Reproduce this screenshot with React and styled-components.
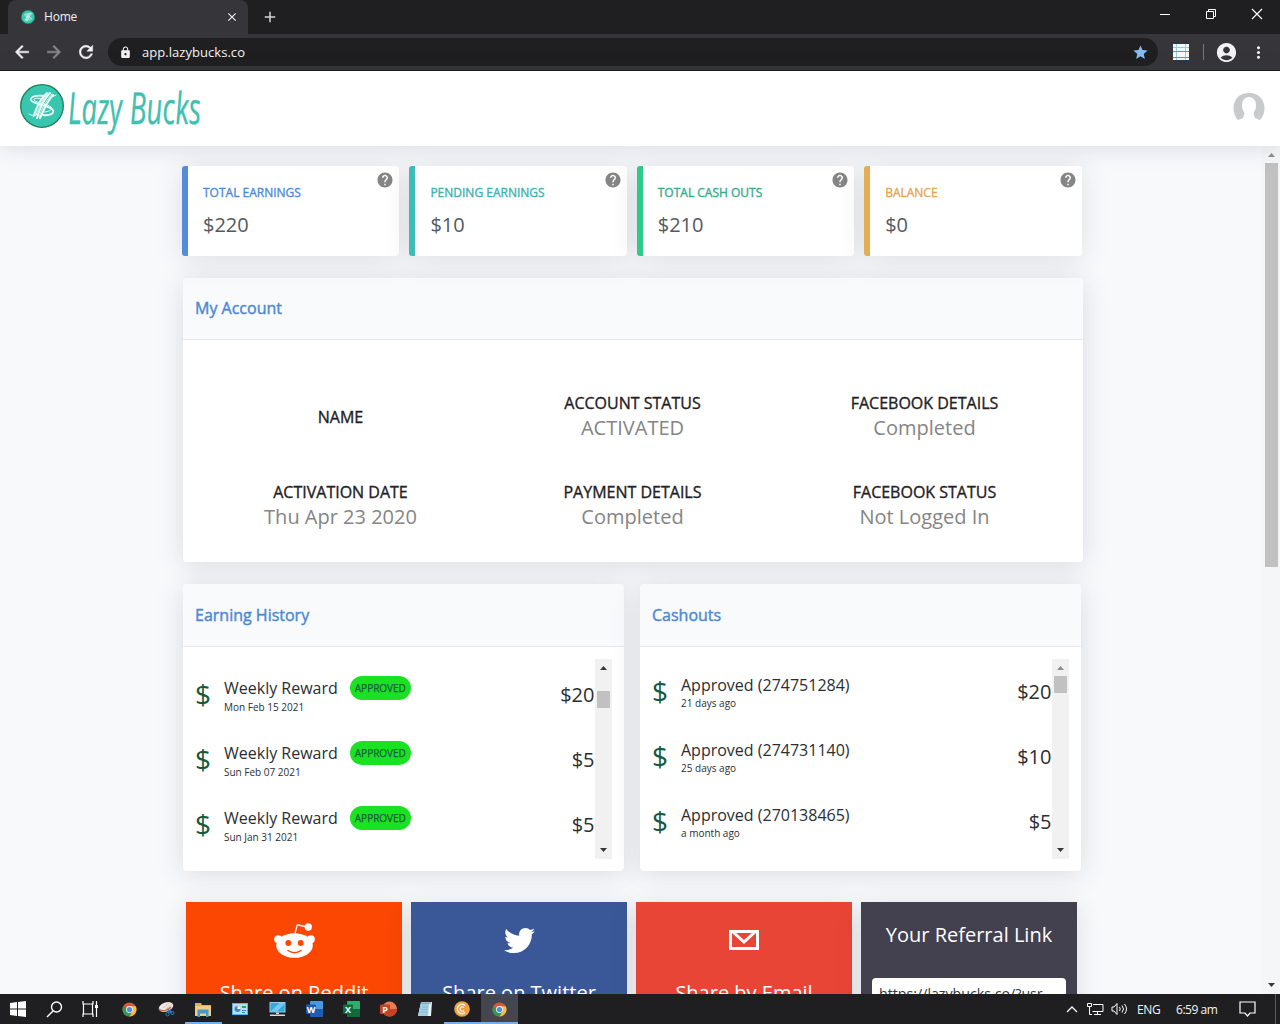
import styled, {createGlobalStyle} from "styled-components";
import {FaTwitter} from "react-icons/fa";
import {
    MdAccountCircle,
    MdAdd,
    MdArrowBack,
    MdArrowForward,
    MdClose,
    MdHelp,
    MdLock,
    MdMoreVert,
    MdRefresh,
    MdStar
} from "react-icons/md";

const GlobalStyle = createGlobalStyle`
    * {
        box-sizing: border-box;
    }

    body {
        margin: 0;
        overflow: hidden;
        font-family: "Open Sans", "Noto Sans", sans-serif;
        color: #2b2e32;
    }

    svg {
        display: block;
        flex-shrink: 0;
    }
`

const stats = [
    {id: 1, name: "TOTAL EARNINGS", value: "$220", color: "#4e8bd8", border: "#538cd8"},
    {id: 2, name: "PENDING EARNINGS", value: "$10", color: "#40b1b0", border: "#3dbcb8"},
    {id: 3, name: "TOTAL CASH OUTS", value: "$210", color: "#36ab8a", border: "#2fcb86"},
    {id: 4, name: "BALANCE", value: "$0", color: "#e3a850", border: "#e4ae57"}
]

const account = [
    {id: 1, name: "NAME"},
    {id: 2, name: "ACCOUNT STATUS", value: "ACTIVATED"},
    {id: 3, name: "FACEBOOK DETAILS", value: "Completed"},
    {id: 4, name: "ACTIVATION DATE", value: "Thu Apr 23 2020"},
    {id: 5, name: "PAYMENT DETAILS", value: "Completed"},
    {id: 6, name: "FACEBOOK STATUS", value: "Not Logged In"}
]

const earnings = [
    {id: 1, title: "Weekly Reward", date: "Mon Feb 15 2021", amount: "$20", badge: "APPROVED"},
    {id: 2, title: "Weekly Reward", date: "Sun Feb 07 2021", amount: "$5", badge: "APPROVED"},
    {id: 3, title: "Weekly Reward", date: "Sun Jan 31 2021", amount: "$5", badge: "APPROVED"}
]

const cashouts = [
    {id: 1, title: "Approved (274751284)", date: "21 days ago", amount: "$20"},
    {id: 2, title: "Approved (274731140)", date: "25 days ago", amount: "$10"},
    {id: 3, title: "Approved (270138465)", date: "a month ago", amount: "$5"}
]

const Screen = styled.div`
    display: flex;
    flex-direction: column;
    width: 1280px;
    height: 1024px;
    overflow: hidden;
    background: #f8f9fb;
`

/* browser window */

const TabStrip = styled.div`
    display: flex;
    height: 34px;
    flex-shrink: 0;
    padding-left: 8px;
    background: #1f1f21;
    color: #f1f1f1;
`

const Tab = styled.div`
    display: flex;
    align-items: center;
    width: 240px;
    padding: 0 9px 0 13px;
    border-radius: 8px 8px 0 0;
    background: #35353a;
    font-size: 12px;

    span {
        flex: 1;
        margin: -1px 0 0 9px;
        letter-spacing: -0.2px;
    }

    svg:last-child path:last-child {
        stroke: #f1f1f1;
    }
`

const NewTab = styled.div`
    display: flex;
    align-items: center;
    flex: 1;
    padding-left: 13px;
    color: #d5d5d7;
`

const WindowButtons = styled.div`
    display: flex;
    width: 138px;

    div {
        display: flex;
        flex: 1;
        justify-content: center;
        padding-top: 8px;
    }
`

const Toolbar = styled.div`
    display: flex;
    align-items: center;
    height: 37px;
    flex-shrink: 0;
    padding: 0 12px;
    border-bottom: 1px solid #19191c;
    background: #35353a;
    color: #f3f3f6;
`

const NavIcon = styled.div`
    width: 32px;
    color: ${({$dim}) => $dim ? "#88888c" : "#f3f3f6"};

    path:last-child {
        stroke: currentColor;
        stroke-width: 0.6px;
    }
`

const AddressBar = styled.div`
    display: flex;
    align-items: center;
    width: 1051px;
    height: 28px;
    padding: 0 9px 0 11px;
    border-radius: 14px;
    background: #1f1f21;
    font-size: 13px;

    span {
        flex: 1;
        margin-left: 10px;
        letter-spacing: 0.05px;
    }
`

const ToolbarEnd = styled.div`
    display: flex;
    align-items: center;
    margin-left: 15px;
`

const Divider = styled.i`
    width: 1px;
    height: 16px;
    margin: 0 11px 0 14px;
    background: #77777b;
`

/* site */

const Header = styled.header`
    position: relative;
    display: flex;
    align-items: center;
    justify-content: space-between;
    height: 75px;
    flex-shrink: 0;
    padding: 0 15px 0 20px;
    background: #fff;
    box-shadow: 0 2px 22px rgba(45, 55, 70, 0.15);
`

const Viewport = styled.div`
    display: flex;
    height: 848px;
    overflow: hidden;
`

const Content = styled.main`
    width: 1262px;
    padding: 20px 0 0 182px;
`

const StatRow = styled.div`
    display: flex;
    gap: 10px;
    width: 899.5px;
`

const StatCard = styled.div`
    display: flex;
    justify-content: space-between;
    flex: 1;
    height: 90px;
    padding: 5px 5px 0 15px;
    border-left: 6px solid ${({$border}) => $border};
    border-radius: 3px;
    background: #fff;
    box-shadow: 0 3px 28px rgba(45, 55, 70, 0.13);

    svg {
        color: #858585;
    }
`

const StatName = styled.div`
    margin-top: 13px;
    color: ${({$color}) => $color};
    font-size: 12px;
    line-height: 17px;
    -webkit-text-stroke: 0.35px;
`

const StatValue = styled.div`
    margin-top: 10px;
    color: #535962;
    font-size: 20px;
    line-height: 27px;
`

const Card = styled.section`
    width: ${({$width}) => $width}px;
    height: ${({$height}) => $height}px;
    border-radius: 4px;
    background: #fff;
    box-shadow: 0 3px 28px rgba(45, 55, 70, 0.15);
`

const CardTitle = styled.div`
    height: ${({$height}) => $height}px;
    padding: 0 12px;
    border-bottom: 1px solid #e5e9ed;
    border-radius: 4px 4px 0 0;
    background: #f8fafc;
    color: #4b88d2;
    font-size: 16px;
    line-height: ${({$height}) => $height * 2 - 63}px;
    -webkit-text-stroke: 0.4px;
`

const AccountCard = styled(Card)`
    margin: 22px 0 0 1px;
`

const AccountGrid = styled.div`
    display: grid;
    grid-template-columns: repeat(3, 292px);
    grid-auto-rows: 89px;
    padding: 31px 11px 0 11.5px;
`

const AccountItem = styled.div`
    display: flex;
    flex-direction: column;
    align-items: center;
    justify-content: center;

    strong {
        color: #1f2124;
        font-size: 16px;
        font-weight: 400;
        line-height: 24px;
        -webkit-text-stroke: 0.35px;
    }

    strong:only-child {
        padding-top: 3px;
    }

    span {
        color: #858585;
        font-size: 20px;
        line-height: 25px;
    }
`

const Columns = styled.div`
    display: flex;
    gap: 16px;
    margin: 22px 0 0 1px;
`

const Scroller = styled.div`
    display: flex;
    height: 200px;
    margin: 12px;
`

const Rows = styled.div`
    flex: 1;
    padding-top: ${({$offset}) => $offset}px;
`

const Row = styled.div`
    display: flex;
    align-items: center;
    height: 65px;
`

const Dollar = styled.div`
    width: 29px;
    padding-bottom: 2px;
    color: #17593c;
    font-size: 28px;
    line-height: 36px;
`

const RowInfo = styled.div`
    flex: 1;
    padding-top: 1px;

    p {
        display: flex;
        align-items: center;
        gap: 12px;
        margin: 0;
        font-size: 16px;
        line-height: 22px;
    }

    small {
        display: block;
        font-size: 10px;
        line-height: 14px;
    }
`

const Badge = styled.span`
    width: 61px;
    height: 24px;
    border-radius: 12px;
    background: #1ae223;
    color: #14603f;
    font-size: 10px;
    line-height: 24px;
    text-align: center;
    -webkit-text-stroke: 0.25px;
`

const Amount = styled.div`
    margin-right: 0.5px;
    font-size: 20px;
`

const Track = styled.div`
    display: flex;
    flex-direction: column;
    align-items: center;
    width: 17px;
    background: #f1f1f2;
`

const TrackThumb = styled.div`
    width: 13px;
    height: 17px;
    margin: ${({$top}) => $top}px 0 auto;
    background: #c1c1c2;
`

const Arrow = styled.div`
    width: 7px;
    height: 4px;
    margin: ${({$down}) => $down ? "0 0 7px" : "7px 0 6px"};
    background: ${({$dim}) => $dim ? "#8b8b8e" : "#36363d"};
    clip-path: ${({$down}) => $down ? "polygon(0 0, 100% 0, 50% 100%)" : "polygon(50% 0, 100% 100%, 0 100%)"};
`

const PageTrack = styled(Track)`
    width: 18px;
    padding-left: 1px;
    background: #f5f6f7;
`

const PageThumb = styled.div`
    width: 13px;
    height: 404px;
    margin-bottom: auto;
    background: #c1c1c2;
`

const ShareRow = styled.div`
    display: flex;
    gap: 9px;
    margin: 31px 0 0 4px;
`

const ShareCard = styled.div`
    display: flex;
    flex-direction: column;
    align-items: center;
    width: 216px;
    height: 160px;
    background: ${({$color}) => $color};
    box-shadow: 0 5px 24px rgba(45, 55, 70, 0.14);
    color: #fff;
    font-size: 20px;
    line-height: 27px;
    white-space: nowrap;
`

const ShareIcon = styled.div`
    display: flex;
    align-items: center;
    height: 76px;
    margin-bottom: 1px;
`

const ReferralTitle = styled.div`
    margin: 19px 0 30px;
`

const ReferralLink = styled.div`
    width: 194px;
    height: 38px;
    padding: 0 7px;
    border-radius: 4px;
    background: #fff;
    color: #33363b;
    font-size: 14.2px;
    line-height: 32px;
`

/* desktop taskbar */

const Taskbar = styled.footer`
    display: flex;
    height: 30px;
    flex-shrink: 0;
    background: #1f1f21;
    color: #f4f4f4;
    font-size: 12px;
`

const TaskItem = styled.div`
    display: flex;
    align-items: center;
    justify-content: center;
    width: ${({$width}) => $width || 37}px;
    height: 30px;
    background: ${({$active}) => $active ? "#45454f" : "none"};
    box-shadow: ${({$open}) => $open ? "inset 0 -2px 0 #75aee8" : "none"};
`

const AppGroup = styled.div`
    display: flex;
    margin-left: 2.5px;
`

const Tray = styled.div`
    display: flex;
    align-items: center;
    margin-left: auto;

    .lang {
        width: 39px;
        margin-left: 9px;
        letter-spacing: -0.3px;
    }

    .time {
        width: 60px;
        letter-spacing: -0.45px;
    }

    .edge {
        width: 1px;
        height: 30px;
        margin: 0 4px 0 19px;
        background: #5a5a5c;
    }
`

const LogoMark = ({size, y = 0}) => (
    <svg y={y} width={size} height={size} viewBox="0 0 44 44" fill="none">
        <circle cx="22" cy="22" r="21.3" fill="#38c6b0" stroke="#1c7f55" strokeWidth="1.3"/>
        <g stroke="#e9fbf8" strokeLinecap="round">
            <path d="M25 12C18 11 10 12 11 16c1 4 16 5 21 9 4 4-2 7-9 6" strokeWidth="1.8"/>
            <path d="M24 15c-6-1-11-1-10 1 2 3 14 4 17 7 2 3-3 5-7 5" strokeWidth="1"/>
            <path d="M27 9C22 13 17 22 14 31M30 9C25 14 20 23 17 34M33 11C28 16 24 25 20 34" strokeWidth="2"/>
            <path d="M28.5 9C23 14 19 22 16 31M32 10C27 15 22 24 19 33" strokeWidth="0.8"/>
            <path d="M9 30c3 2 6 2 8 0M13 33l4-3M32 13l4-2" strokeWidth="1"/>
        </g>
    </svg>
)

const Logo = () => (
    <svg width="190" height="56" viewBox="0 0 190 56">
        <LogoMark size={44} y={3}/>
        <text transform="translate(48.5 43) skewX(3) scale(1 1.7)" fontSize="26" fontStyle="italic" fill="#42bfb0"
              stroke="#42bfb0" strokeWidth="0.2" fontFamily="Open Sans" textLength="133"
              lengthAdjust="spacingAndGlyphs">Lazy Bucks</text>
    </svg>
)

const Avatar = () => (
    <svg width="32" height="31" viewBox="0 0 32 31">
        <path d="M5 27C-3 19-1 0 16 0s19 19 11 27l-5-2c-1-3-2-4-1-6 4-6 2-15-5-15S7 13 11 19c1 2 0 3-1 6z"
              fill="#c9cacc"/>
    </svg>
)

const GridExtension = () => (
    <svg width="16" height="16" viewBox="0 0 16 16">
        <path fill="#f1faff" d="M0 0h16v16H0z"/>
        <path d="M3.5 0v16M12.5 0v16M0 3.5h16" stroke="#9ccbe8"/>
        <path d="M0 7.5h16M0 13.5h16" stroke="#459fd8"/>
    </svg>
)

const RedditIcon = () => (
    <svg width="42" height="36" viewBox="0 0 42 36">
        <g fill="#fff">
            <circle cx="5.2" cy="17.3" r="4"/>
            <circle cx="37.8" cy="17.3" r="4"/>
            <ellipse cx="21.5" cy="23.5" rx="18.3" ry="12.3"/>
            <circle cx="35.3" cy="5" r="3.7"/>
        </g>
        <path d="M21.8 12l2.5-9.2L32 4.5" fill="none" stroke="#fff" strokeWidth="1.3"/>
        <g fill="#fb4702">
            <circle cx="15.3" cy="21" r="2.9"/>
            <circle cx="27.7" cy="21" r="2.9"/>
        </g>
        <path d="M15 28.5q6.5 4.5 13 0" fill="none" stroke="#fb4702" strokeWidth="1.5" strokeLinecap="round"/>
    </svg>
)

const MailIcon = () => (
    <svg width="30" height="20" viewBox="0 0 30 20" fill="none" stroke="#fff" strokeWidth="3">
        <path d="M1.5 1.5h27v17h-27z"/>
        <path d="M4 2l11 10L26 2"/>
    </svg>
)

const ChromeIcon = () => (
    <svg width="15" height="15" viewBox="0 0 16 16">
        <circle cx="8" cy="8" r="7.5" fill="#e4503d"/>
        <path d="M8 8L1.5 4.3A7.5 7.5 0 0 0 8 15.5l3.2-5.6z" fill="#2d9b57"/>
        <path d="M8 4.5h6.6A7.5 7.5 0 0 1 8 15.5L11.2 10z" fill="#f2c044"/>
        <circle cx="8" cy="8" r="3.7" fill="#f4f4f4"/>
        <circle cx="8" cy="8" r="2.8" fill="#4c8fe0"/>
    </svg>
)

const SnipIcon = () => (
    <svg width="17" height="16" viewBox="0 0 17 16" fill="none">
        <ellipse cx="8" cy="6" rx="7.5" ry="4.5" transform="rotate(-20 8 6)" fill="#eee9e6"/>
        <path d="M1 8c3 3 8 2 12-2" stroke="#c66b45" strokeWidth="1.3"/>
        <path d="M5 7l6-5M8 8l6-5" stroke="#d9a58c" strokeWidth="0.7"/>
        <path d="M9 8l5 4M13 8l-3 4" stroke="#397bc2" strokeWidth="1.5"/>
        <circle cx="9.5" cy="13.3" r="1.6" stroke="#397bc2"/>
        <circle cx="14.5" cy="12" r="1.6" stroke="#397bc2"/>
    </svg>
)

const ExplorerIcon = () => (
    <svg width="16" height="15" viewBox="0 0 16 15">
        <path d="M0 1h6l1 2h9v11H0z" fill="#e9a94f"/>
        <path d="M0 4h16v10H0z" fill="#f0cb86"/>
        <path d="M2.5 7.5h11V15H11v-3.5H5V15H2.5z" fill="#429bd0"/>
    </svg>
)

const ControlIcon = () => (
    <svg width="16" height="12" viewBox="0 0 16 12">
        <path d="M0 0h16v12H0z" fill="#58b4e5"/>
        <path d="M1 1h14v10H1z" fill="#b5e0f3"/>
        <circle cx="5.5" cy="6" r="3" fill="#3989ca"/>
        <path d="M5.5 6V3a3 3 0 0 1 3 3z" fill="#f4f8fa"/>
        <path d="M10 3h4v2h-4z" fill="#2b9f75"/>
        <path d="M10 7h4v1h-4zM10 9h3v1h-3z" fill="#3989ca"/>
    </svg>
)

const ComputerIcon = () => (
    <svg width="17" height="15" viewBox="0 0 17 15">
        <path d="M.5 0h16v10.5H.5z" fill="#8fd0ea"/>
        <path d="M1.5 1h14v8.5h-14z" fill="#39a5da"/>
        <path d="M1.5 9.5l9-8.5h5v1L8 9.5z" fill="#73c9eb"/>
        <path d="M7 10.5h3V12H7zM1 12.5h15V14H1z" fill="#d5dde2"/>
    </svg>
)

const OfficeIcon = ({letter, dark, light, round}) => (
    <svg width="17" height="16" viewBox="0 0 17 16">
        {round ? <circle cx="9.5" cy="8" r="7.5" fill={light}/> : <rect x="4" width="13" height="16" rx="1" fill={light}/>}
        {round ? <path d="M9.5 8H17a7.5 7.5 0 0 1-15 0z" fill={dark}/> : <path d="M4 8h13v8H4z" fill={dark}/>}
        <rect y="3.5" width="10" height="9.5" rx="1" fill={dark}/>
        <text x="5" y="11.5" fontSize="9" fontWeight="700" fill="#fff" textAnchor="middle">{letter}</text>
    </svg>
)

const NotepadIcon = () => (
    <svg width="16" height="16" viewBox="0 0 16 16">
        <path d="M4 1h11l-1 14H1z" fill="#e6f3f7"/>
        <path d="M4 2l-3 13h10l1-13z" fill="#9fcde1"/>
        <path d="M5 1v2M7 1v2M9 1v2M11 1v2M13 1v2" stroke="#6b8795"/>
        <path d="M5 6h6M4.5 8.5h6M4 11h6" stroke="#83b7cd" strokeWidth="0.7"/>
    </svg>
)

const CoinIcon = () => (
    <svg width="16" height="16" viewBox="0 0 16 16" fill="none">
        <circle cx="8" cy="8" r="7.8" fill="#eea044"/>
        <path d="M11 4.5a4.6 4.6 0 1 0 0 7" stroke="#fff2dd" strokeWidth="1.6"/>
        <path d="M10 6.5a2.2 2.2 0 1 0 0 3" stroke="#fff2dd" strokeWidth="1.2"/>
    </svg>
)

const taskApps = [
    {id: 1, icon: <ChromeIcon/>},
    {id: 2, icon: <SnipIcon/>},
    {id: 3, icon: <ExplorerIcon/>, open: true},
    {id: 4, icon: <ControlIcon/>},
    {id: 5, icon: <ComputerIcon/>},
    {id: 6, icon: <OfficeIcon letter="W" dark="#1f5bb0" light="#4a9ae0"/>},
    {id: 7, icon: <OfficeIcon letter="X" dark="#12693d" light="#2cae6c"/>},
    {id: 8, icon: <OfficeIcon letter="P" dark="#c24424" light="#ea7b52" round/>},
    {id: 9, icon: <NotepadIcon/>},
    {id: 10, icon: <CoinIcon/>, open: true},
    {id: 11, icon: <ChromeIcon/>, open: true, active: true}
]

const BrowserBar = () => (
    <>
        <TabStrip>
            <Tab>
                <LogoMark size={14}/>
                <span>Home</span>
                <MdClose size={14}/>
            </Tab>
            <NewTab><MdAdd size={18}/></NewTab>
            <WindowButtons>
                <div>
                    <svg width="12" height="12"><path d="M1 6.5h10" stroke="#fff"/></svg>
                </div>
                <div>
                    <svg width="12" height="12" fill="none" stroke="#fff">
                        <path d="M1.5 3.5h7v7h-7zM3.5 3.5v-2h7v7h-2"/>
                    </svg>
                </div>
                <div>
                    <svg width="12" height="12"><path d="M1 1l10 10M11 1L1 11" stroke="#fff" strokeWidth="1.2"/></svg>
                </div>
            </WindowButtons>
        </TabStrip>
        <Toolbar>
            <NavIcon><MdArrowBack size={20}/></NavIcon>
            <NavIcon $dim><MdArrowForward size={20}/></NavIcon>
            <NavIcon><MdRefresh size={20}/></NavIcon>
            <AddressBar>
                <MdLock size={13}/>
                <span>app.lazybucks.co</span>
                <MdStar size={17} color="#86bdf5"/>
            </AddressBar>
            <ToolbarEnd>
                <GridExtension/>
                <Divider/>
                <MdAccountCircle size={23}/>
                <MdMoreVert size={19} style={{marginLeft: 11}}/>
            </ToolbarEnd>
        </Toolbar>
    </>
)

const History = ({title, items, offset, thumbTop, atTop}) => (
    <Card $width={441} $height={287}>
        <CardTitle $height={63}>{title}</CardTitle>
        <Scroller>
            <Rows $offset={offset}>
                {items.map((item) => (
                    <Row key={item.id}>
                        <Dollar>$</Dollar>
                        <RowInfo>
                            <p>{item.title}{item.badge && <Badge>{item.badge}</Badge>}</p>
                            <small>{item.date}</small>
                        </RowInfo>
                        <Amount>{item.amount}</Amount>
                    </Row>
                ))}
            </Rows>
            <Track>
                <Arrow $dim={atTop}/>
                <TrackThumb $top={thumbTop}/>
                <Arrow $down/>
            </Track>
        </Scroller>
    </Card>
)

const WindowsTaskbar = () => (
    <Taskbar>
        <TaskItem $width={36}>
            <svg width="16" height="16" fill="#fff"><path d="M0 2l7-1v6.5H0zM8 1l8-1v7.5H8zM0 8.5h7V15l-7-1zM8 8.5h8V16l-8-1z"/></svg>
        </TaskItem>
        <TaskItem $width={36}>
            <svg width="17" height="17" fill="none" stroke="#fff" strokeWidth="1.4">
                <circle cx="10.5" cy="6" r="5"/>
                <path d="M7 10l-6 6"/>
            </svg>
        </TaskItem>
        <TaskItem $width={36}>
            <svg width="17" height="16" fill="none" stroke="#fff" strokeWidth="1.2">
                <path d="M1 0v3h10V0M1 16v-3h10v3M1.5 3v10M10.5 3v10M14.5 0v16"/>
                <path d="M13 5.5h3" strokeWidth="3"/>
            </svg>
        </TaskItem>
        <AppGroup>
            {taskApps.map((item) => (
                <TaskItem key={item.id} $open={item.open} $active={item.active}>{item.icon}</TaskItem>
            ))}
        </AppGroup>
        <Tray>
            <svg width="12" height="8" fill="none" stroke="#fff" strokeWidth="1.3"><path d="M1 7l5-5 5 5"/></svg>
            <svg width="17" height="14" fill="none" stroke="#fff" style={{marginLeft: 9}}>
                <path d="M6 2.5h10v7H5.5M10.5 9.5v3M7 12.5h7M.5 1.5h4v3h-4zM2.5 4.5v8H5"/>
            </svg>
            <svg width="17" height="14" fill="none" stroke="#fff" style={{marginLeft: 7}}>
                <path d="M1 5h2l3-3.5v11L3 9H1zM8.5 5q1.5 2 0 4M11 3.5q3 3.5 0 7M13.5 2q4 5 0 10"/>
            </svg>
            <div className="lang">ENG</div>
            <div className="time">6:59 am</div>
            <svg width="17" height="16" fill="none" stroke="#fff" strokeWidth="1.2" style={{marginLeft: 3}}>
                <path d="M1 1h15v11h-5l-2.5 3L6 12H1z"/>
            </svg>
            <div className="edge"/>
        </Tray>
    </Taskbar>
)

const App = () => {
    return (
        <Screen>
            <GlobalStyle/>
            <BrowserBar/>
            <Header>
                <Logo/>
                <Avatar/>
            </Header>
            <Viewport>
                <Content>
                    <StatRow>
                        {stats.map((item) => (
                            <StatCard key={item.id} $border={item.border}>
                                <div>
                                    <StatName $color={item.color}>{item.name}</StatName>
                                    <StatValue>{item.value}</StatValue>
                                </div>
                                <MdHelp size={18}/>
                            </StatCard>
                        ))}
                    </StatRow>
                    <AccountCard $width={900} $height={284}>
                        <CardTitle $height={62}>My Account</CardTitle>
                        <AccountGrid>
                            {account.map((item) => (
                                <AccountItem key={item.id}>
                                    <strong>{item.name}</strong>
                                    {item.value && <span>{item.value}</span>}
                                </AccountItem>
                            ))}
                        </AccountGrid>
                    </AccountCard>
                    <Columns>
                        <History title="Earning History" items={earnings} offset={3} thumbTop={15}/>
                        <History title="Cashouts" items={cashouts} offset={0} thumbTop={0} atTop/>
                    </Columns>
                    <ShareRow>
                        <ShareCard $color="#fb4702">
                            <ShareIcon><RedditIcon/></ShareIcon>
                            Share on Reddit
                        </ShareCard>
                        <ShareCard $color="#3a5898">
                            <ShareIcon><FaTwitter size={31}/></ShareIcon>
                            Share on Twitter
                        </ShareCard>
                        <ShareCard $color="#e94536">
                            <ShareIcon><MailIcon/></ShareIcon>
                            Share by Email
                        </ShareCard>
                        <ShareCard $color="#43414f">
                            <ReferralTitle>Your Referral Link</ReferralTitle>
                            <ReferralLink>https://lazybucks.co/?usr</ReferralLink>
                        </ShareCard>
                    </ShareRow>
                </Content>
                <PageTrack>
                    <Arrow $dim/>
                    <PageThumb/>
                    <Arrow $down/>
                </PageTrack>
            </Viewport>
            <WindowsTaskbar/>
        </Screen>
    )
}

export default App
